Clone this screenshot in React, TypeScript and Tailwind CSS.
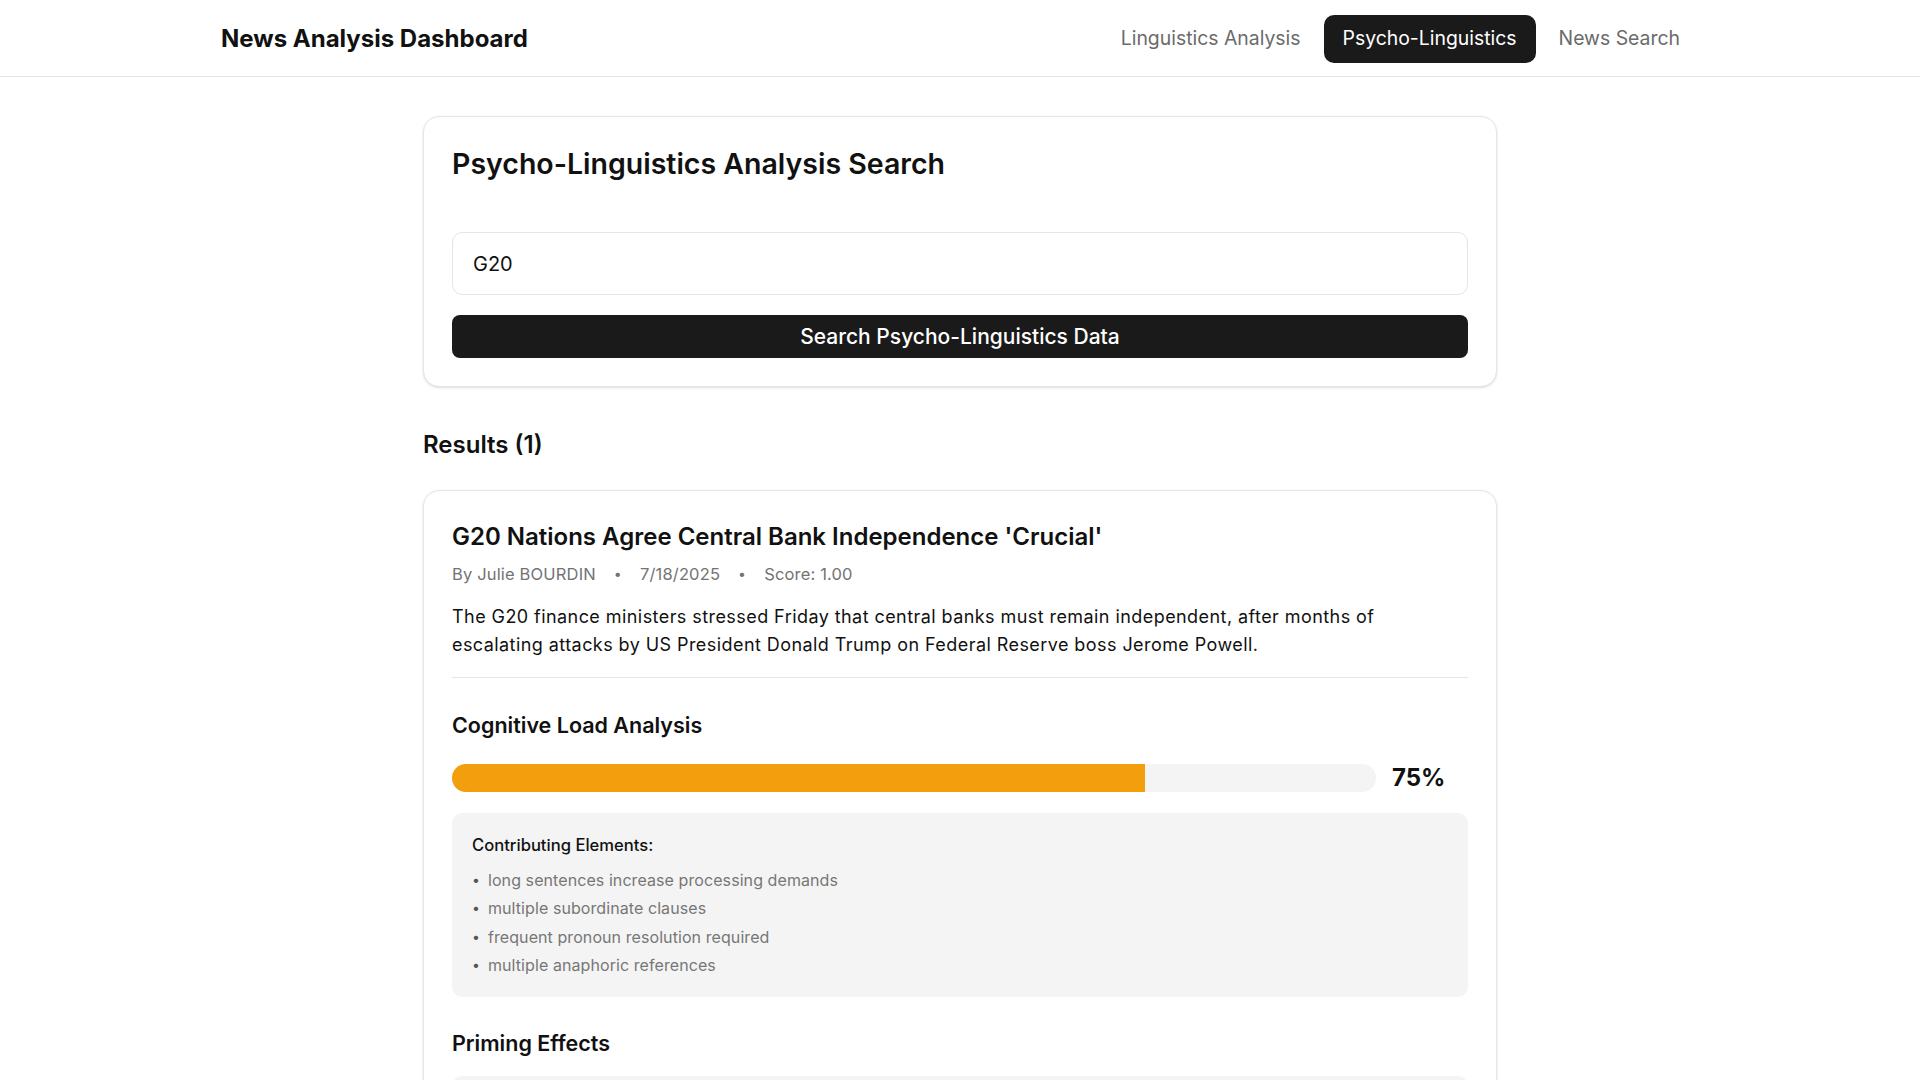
import React from 'react';

const navItems = ['Linguistics Analysis', 'Psycho-Linguistics', 'News Search'];

const cognitiveElements = [
  'long sentences increase processing demands',
  'multiple subordinate clauses',
  'frequent pronoun resolution required',
  'multiple anaphoric references',
];

const primingItems = [
  'institutional authority framing (central banks, G20)',
  'conflict framing around political pressure',
  'stability and independence as positive anchors',
];

const framingItems = [
  'economic governance framed as collective responsibility',
  'political interference presented as a threat',
];

function Header() {
  return (
    <header className="bg-white border-b border-[#e5e5e5]">
      <div className="mx-auto flex h-[76px] w-[1478px] items-center justify-between">
        <h1 className="pt-[2px] text-2xl font-bold text-[#111]">News Analysis Dashboard</h1>
        <nav className="flex items-center gap-1 pt-[1px]">
          {navItems.map((item) => (
            <button
              key={item}
              className={
                item === 'Psycho-Linguistics'
                  ? 'h-12 rounded-[10px] bg-[#1a1a1a] px-[19px] text-[19.4px] text-white'
                  : 'h-12 rounded-[10px] px-[19px] text-[19.4px] text-[#6b6b6b]'
              }
            >
              {item}
            </button>
          ))}
        </nav>
      </div>
    </header>
  );
}

function ElementBox({ title, items }: { title: string; items: string[] }) {
  return (
    <div className="mt-[19px] rounded-[10px] bg-[#f4f4f4] p-5">
      <p className="text-[16.6px] font-medium text-[#111]">{title}</p>
      <ul className="mt-[10px] flex flex-col gap-[4.5px]">
        {items.map((item) => (
          <li key={item} className="flex items-center gap-2 text-base tracking-[0.005em] text-[#777]">
            <span className="text-sm text-[#555]">•</span>
            <span>{item}</span>
          </li>
        ))}
      </ul>
    </div>
  );
}

function ScoreBar({ value, color }: { value: number; color: string }) {
  return (
    <div className="mt-[23px] flex h-8 items-center gap-4">
      <div className="h-7 flex-1 overflow-hidden rounded-full bg-[#f4f4f4]">
        <div className={`h-full ${color}`} style={{ width: `${value}%` }} />
      </div>
      <span className="w-[76px] text-2xl font-bold text-[#111]">{value}%</span>
    </div>
  );
}

export default function App() {
  return (
    <div className="min-h-screen bg-white text-[#111]" style={{ fontFamily: 'Inter, "Noto Sans", sans-serif' }}>
      <Header />

      <main className="mx-auto w-[1074px] pt-[39px] pb-16">
        {/* Search card */}
        <section className="rounded-2xl border border-[#e5e5e5] bg-white p-7 shadow-sm">
          <h2 className="pt-[1px] text-[28.5px] font-semibold leading-9">Psycho-Linguistics Analysis Search</h2>
          <input
            defaultValue="G20"
            className="mt-[50px] block h-[63px] w-full rounded-[10px] border border-[#e5e5e5] px-[20px] text-xl text-[#111] outline-none"
          />
          <button className="mt-5 h-[43px] w-full rounded-lg bg-[#1a1a1a] text-[21px] font-medium text-white">
            Search Psycho-Linguistics Data
          </button>
        </section>

        <h3 className="mt-[42px] text-2xl font-semibold leading-8">Results (1)</h3>

        {/* Result card */}
        <article className="mt-[29px] rounded-2xl border border-[#e5e5e5] bg-white p-7 shadow-sm">
          <h4 className="mt-[2px] text-2xl font-semibold leading-8">
            G20 Nations Agree Central Bank Independence 'Crucial'
          </h4>
          <div className="mt-[9px] flex items-center gap-[18px] text-[16.5px] tracking-[0.01em] text-[#737373]">
            <span>By Julie BOURDIN</span>
            <span className="text-sm">•</span>
            <span>7/18/2025</span>
            <span className="text-sm">•</span>
            <span>Score: 1.00</span>
          </div>
          <p className="mt-4 text-lg leading-7 tracking-[0.024em] text-[#111]">
            The G20 finance ministers stressed Friday that central banks must remain independent, after months of
            escalating attacks by US President Donald Trump on Federal Reserve boss Jerome Powell.
          </p>

          <div className="mt-[18px] border-t border-[#e5e5e5]" />

          <h5 className="mt-[33px] text-[21.5px] font-semibold leading-7">Cognitive Load Analysis</h5>
          <ScoreBar value={75} color="bg-[#f39e0c]" />
          <ElementBox title="Contributing Elements:" items={cognitiveElements} />

          <h5 className="mt-8 text-[21.5px] font-semibold leading-7">Priming Effects</h5>
          <ElementBox title="Primed Concepts:" items={primingItems} />

          <h5 className="mt-8 text-[21.5px] font-semibold leading-7">Framing Effects</h5>
          <ScoreBar value={60} color="bg-[#3b82f6]" />
          <ElementBox title="Identified Frames:" items={framingItems} />

          <h5 className="mt-8 text-[21.5px] font-semibold leading-7">Emotional Tone</h5>
          <ScoreBar value={40} color="bg-[#22c55e]" />
          <ElementBox title="Indicators:" items={['measured, formal register', 'low emotional intensity']} />

          <h5 className="mt-8 text-[21.5px] font-semibold leading-7">Persuasion Techniques</h5>
          <ScoreBar value={55} color="bg-[#a855f7]" />
          <ElementBox
            title="Detected Techniques:"
            items={['appeal to authority', 'consensus framing', 'implicit contrast with political actors']}
          />
        </article>
      </main>
    </div>
  );
}
